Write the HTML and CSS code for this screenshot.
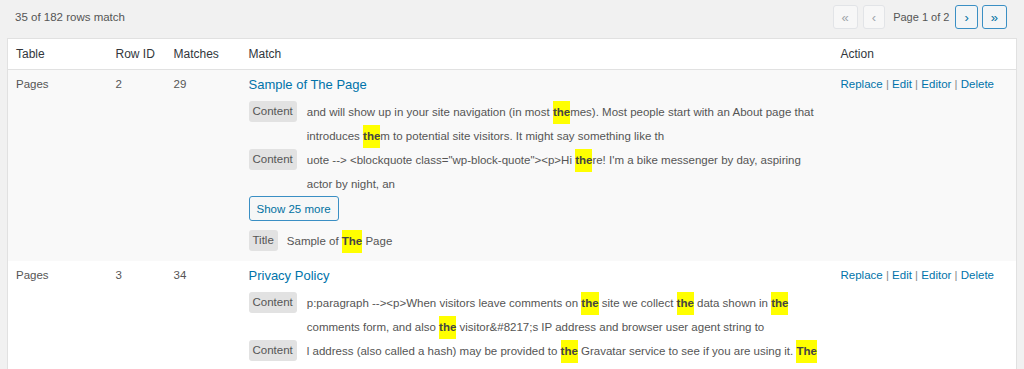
FILE: index.html
```html
<!DOCTYPE html>
<html lang="en">
<head>
  <meta charset="UTF-8">
  <meta name="viewport" content="width=device-width, initial-scale=1.0">
  <title>Search results</title>
  <link rel="stylesheet" href="styles.css">
</head>
<body>
  <div class="wrap">
    <div class="topbar">
      <span class="count">35 of 182 rows match</span>
      <div class="pager">
        <span class="page-btn disabled">&laquo;</span>
        <span class="page-btn disabled">&lsaquo;</span>
        <span class="page-info">Page 1 of 2</span>
        <a class="page-btn" href="#">&rsaquo;</a>
        <a class="page-btn" href="#">&raquo;</a>
      </div>
    </div>

    <table class="results">
      <colgroup>
        <col class="col-table">
        <col class="col-id">
        <col class="col-matches">
        <col class="col-match">
        <col class="col-action">
      </colgroup>
      <thead>
        <tr>
          <th>Table</th>
          <th>Row ID</th>
          <th>Matches</th>
          <th>Match</th>
          <th>Action</th>
        </tr>
      </thead>
      <tbody>
        <tr class="alt">
          <td>Pages</td>
          <td>2</td>
          <td>29</td>
          <td>
            <a class="row-title" href="#">Sample of The Page</a>
            <div class="context">
              <span class="tag">Content</span>
              <div class="snippet">and will show up in your site navigation (in most <b class="hl">the</b>mes). Most people start with an About page that introduces <b class="hl">the</b>m to potential site visitors. It might say something like th</div>
            </div>
            <div class="context">
              <span class="tag">Content</span>
              <div class="snippet">uote --&gt; &lt;blockquote class="wp-block-quote"&gt;&lt;p&gt;Hi <b class="hl">the</b>re! I'm a bike messenger by day, aspiring actor by night, an</div>
            </div>
            <button class="more">Show 25 more</button>
            <div class="context title-ctx">
              <span class="tag">Title</span>
              <div class="snippet">Sample of <b class="hl">The</b> Page</div>
            </div>
          </td>
          <td class="actions">
            <a href="#">Replace</a> | <a href="#">Edit</a> | <a href="#">Editor</a> | <a href="#">Delete</a>
          </td>
        </tr>
        <tr>
          <td>Pages</td>
          <td>3</td>
          <td>34</td>
          <td>
            <a class="row-title" href="#">Privacy Policy</a>
            <div class="context">
              <span class="tag">Content</span>
              <div class="snippet">p:paragraph --&gt;&lt;p&gt;When visitors leave comments on <b class="hl">the</b> site we collect <b class="hl">the</b> data shown in <b class="hl">the</b> comments form, and also <b class="hl">the</b> visitor&amp;#8217;s IP address and browser user agent string to</div>
            </div>
            <div class="context">
              <span class="tag">Content</span>
              <div class="snippet">l address (also called a hash) may be provided to <b class="hl">the</b> Gravatar service to see if you are using it. <b class="hl">The</b> Gravatar service privacy policy is available here: https://automattic.com</div>
            </div>
          </td>
          <td class="actions">
            <a href="#">Replace</a> | <a href="#">Edit</a> | <a href="#">Editor</a> | <a href="#">Delete</a>
          </td>
        </tr>
      </tbody>
    </table>
  </div>
</body>
</html>
```

FILE: styles.css
```css
body {
  margin: 0;
  background: #f1f1f1;
  color: #555;
  font-family: "Liberation Sans", Arial, sans-serif;
  font-size: 11.5px;
}

a {
  color: #0073aa;
  text-decoration: none;
}

.wrap {
  padding: 0 7px 8px;
}

/* top bar */
.topbar {
  display: flex;
  justify-content: space-between;
  align-items: center;
  height: 34px;
  padding: 0 10px 0 8px;
  margin-bottom: 4px;
}

.count {
  color: #555;
}

.pager {
  display: flex;
  align-items: center;
}

.page-btn {
  display: flex;
  align-items: center;
  justify-content: center;
  box-sizing: border-box;
  height: 24px;
  padding: 0 8px;
  margin-left: 4px;
  border: 1px solid #3a8fc4;
  border-radius: 3px;
  background: #f3f5f6;
  color: #0071a1;
  font-size: 13px;
}

.page-btn:first-child {
  margin-left: 0;
}

.page-btn.disabled {
  border-color: #e2e4e7;
  background: #f7f7f7;
  color: #a0a5aa;
  margin-left: 5px;
}

.page-info {
  font-size: 11px;
  color: #555;
  margin: 0 2px 0 8px;
}

/* table */
.results {
  width: 100%;
  table-layout: fixed;
  border-collapse: collapse;
  background: #fff;
  border: 1px solid #e1e1e1;
}

.col-table { width: 100px; }
.col-id { width: 58px; }
.col-matches { width: 75px; }
.col-action { width: 184px; }

th {
  height: 30px;
  padding: 0 8px;
  text-align: left;
  font-weight: normal;
  font-size: 12px;
  color: #32373c;
  border-bottom: 1px solid #e1e1e1;
}

td {
  padding: 7px 8px 8px;
  vertical-align: top;
  line-height: 15px;
}

tr.alt td {
  background: #f9f9f9;
}

.row-title {
  display: block;
  font-size: 13px;
  line-height: 16px;
  margin-bottom: 7px;
}

.context {
  display: flex;
  align-items: flex-start;
}

.tag {
  flex: none;
  margin: 1px 10px 0 0;
  padding: 0 4px;
  height: 21px;
  line-height: 21px;
  border-radius: 3px;
  background: #e2e2e2;
  color: #555;
}

.title-ctx .tag {
  margin-right: 9px;
}

.snippet {
  max-width: 513px;
  line-height: 24px;
}

.hl {
  display: inline-block;
  line-height: 23px;
  background: #ffff00;
  color: #444;
}

.more {
  display: block;
  margin: 0 0 8px;
  height: 25px;
  padding: 0 7px;
  border: 1px solid #3a8fc4;
  border-radius: 3px;
  background: #f6f7f7;
  color: #0071a1;
  font-family: inherit;
  font-size: 11.5px;
  cursor: pointer;
}

.actions {
  color: #888;
}
```
